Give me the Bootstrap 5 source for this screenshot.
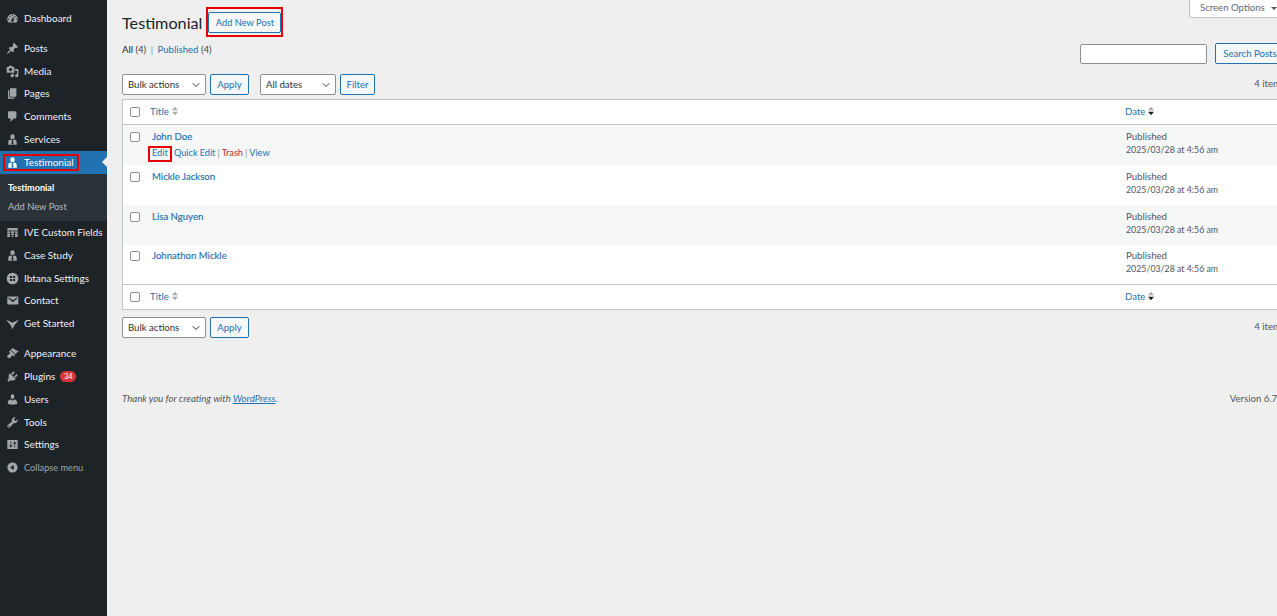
<!DOCTYPE html>
<html lang="en">
<head>
    <meta charset="UTF-8">
    <meta name="viewport" content="width=device-width, initial-scale=1.0">
    <title>Testimonial</title>
    <link href="https://cdn.jsdelivr.net/npm/bootstrap@5.3.0/dist/css/bootstrap.min.css" rel="stylesheet">
    <style>
        html, body { height: 100%; }
        body { background: #efefef; font-family: "Lato", "Liberation Sans", sans-serif; font-size: 9.6px; color: #3c434a; overflow: hidden; }
        a { color: #2271b1; text-decoration: none; }
        .wp-page { width: 1285px; height: 616px; }

        .side-bar { width: 107px; flex: none; background: #1d2327; padding-top: 7px; }
        .side-item { height: 22.85px; padding-left: 6px; gap: 5px; color: #f0f0f1; font-size: 10px; position: relative; white-space: nowrap; }
        .side-item svg { width: 13px; height: 13px; fill: #a2a6aa; flex: none; }
        .side-gap { margin-top: 7px; }
        .side-active { background: #2271b1; color: #fff; }
        .side-active svg { fill: #fff; }
        .side-active::after { content: ""; position: absolute; right: 0; top: 6px; border: 5.5px solid transparent; border-right-color: #efefef; border-left: 0; }
        .side-sub { background: #2c3338; height: 47px; padding: 4px 0 0 8px; }
        .side-sub div { height: 19px; line-height: 19px; font-size: 9.4px; color: #b4b9be; }
        .side-sub .sub-current { color: #fff; font-weight: 700; font-size: 9.1px; }
        .side-item.side-collapse { color: #a2a6aa; font-size: 9.2px; }
        .side-item.side-long { font-size: 9.8px; }
        .plugin-count { background: #d63638; color: #fff; font-size: 7.5px; line-height: 11px; height: 11px; padding: 0 3.5px; border-radius: 6px; }
        .red-box { position: absolute; border: 2px solid #e60000; pointer-events: none; }
        .box-side { left: 3px; top: 3px; width: 76px; height: 17px; }
        .box-add { left: -3px; top: -6px; width: 77px; height: 30px; }
        .box-edit { left: -4px; top: 0; width: 24px; height: 16px; }

        .main-area { flex: 1; padding-left: 15px; position: relative; }
        .screen-tab { position: absolute; right: 0; top: 0; width: 96px; height: 18px; background: #fff; border: 1px solid #c3c4c7; border-top: 0; border-radius: 0 0 0 3px; padding-left: 10px; color: #646970; line-height: 15px; }
        .caret-down { display: inline-block; border: 3.5px solid transparent; border-top-color: #50575e; border-bottom: 0; margin-left: 6px; vertical-align: middle; }
        .head-row { padding-top: 12px; height: 33px; gap: 6px; }
        .page-title { font-size: 16.2px; margin: 0; color: #1d2327; font-weight: 400; line-height: 21px; font-family: inherit; }
        .wp-btn { background: #f6f7f7; border: 1px solid #2271b1; color: #2271b1; border-radius: 2px; font-size: 9.6px; padding: 0; line-height: 19px; height: 21px; text-align: center; display: block; }
        .wp-btn.btn-add { position: relative; width: 73px; font-size: 9.3px; }
        .btn-search { width: 70px; }
        .btn-apply { width: 39px; }
        .btn-filter { width: 35px; }
        .filter-row { margin-top: 10px; height: 20px; font-size: 9.6px; line-height: 13px; }
        .filter-row b { color: #1d2327; font-weight: 400; }
        .filter-row .text-sep { color: #8c8f94; margin: 0 2px; }
        .search-box { width: 127px; height: 20px; background: #fff; border: 1px solid #8c8f94; border-radius: 2px; }
        .wp-select.form-select { width: 84px; height: 21px; font-size: 9.6px; line-height: 1; padding: 0 14px 0 5px; color: #2c3338; border: 1px solid #8c8f94; border-radius: 2px; background-position: right 4px center; background-size: 10px 8px; min-height: 0; }
        .wp-select.select-dates { width: 76px; margin-left: 7px; }
        .table-nav { margin-top: 11px; }
        .item-count { color: #50575e; }

        .post-table { width: 100%; margin: 0; background: #fff; border: 1px solid #c3c4c7; font-size: 9.6px; table-layout: fixed; border-collapse: separate; border-spacing: 0; border-right: 0; }
        .post-table td, .post-table th { border: 0; padding: 0; background: transparent; box-shadow: none; vertical-align: top; font-weight: 400; }
        .post-table .col-check { width: 27px; }
        .post-table .col-date { width: 160px; }
        .head-line td, .head-line th { height: 25px; vertical-align: middle; }
        .post-table thead th { border-bottom: 1px solid #c3c4c7; }
        .post-table tfoot th { border-top: 1px solid #c3c4c7; }
        .post-row td { height: 40px; padding-top: 6px; }
        .post-table .post-row.row-last td { height: 39px; padding-top: 5px; }
        .post-row.row-odd td { background: #f6f7f7; }
        .post-table .post-row td.title-cell { padding-left: 2px; padding-top: 6px; line-height: 12px; }
        .post-table .post-row.row-last td.title-cell { padding-top: 5px; }
        .post-table .post-row td.date-cell { padding-left: 1px; line-height: 13px; color: #50575e; padding-top: 5px; }
        .post-table .post-row.row-last td.date-cell { padding-top: 4px; }
        .date-line { font-size: 8.8px; }
        .post-title { font-size: 9.6px; -webkit-text-stroke: 0.15px #2271b1; }
        .row-links { margin-top: 3px; color: #8c8f94; white-space: nowrap; position: relative; line-height: 13px; font-size: 9.2px; word-spacing: -0.25px; }
        .row-links .edit-wrap { position: relative; display: inline-block; margin-right: 4px; }
        .trash-link { color: #b32d2e; }
        .wp-check.form-check-input { width: 10px; height: 10px; margin: 0 0 0 7px; border: 1px solid #8c8f94; border-radius: 2px; background-color: #fff; float: none; display: block; }
        .post-row .wp-check.form-check-input { margin-top: 1px; }
        .sort-mark { display: inline-block; width: 6px; height: 10px; vertical-align: -1px; margin-left: 3px; }
        .bottom-bar { margin-top: 7px; height: 21px; }
        .foot-line { margin-top: 54px; font-size: 9.6px; color: #50575e; }
        .foot-line a { text-decoration: underline; }
    </style>
</head>
<body>
    <div class="wp-page d-flex">
        <div class="side-bar">
            <div class="side-item d-flex align-items-center"><svg viewBox="0 0 20 20"><path d="M3.76 16h12.48c1.1-1.37 1.76-3.11 1.76-5 0-4.42-3.58-8-8-8s-8 3.58-8 8c0 1.89.66 3.63 1.76 5zM10 4c.55 0 1 .45 1 1s-.45 1-1 1-1-.45-1-1 .45-1 1-1zM6 6c.55 0 1 .45 1 1s-.45 1-1 1-1-.45-1-1 .45-1 1-1zm8 0c.55 0 1 .45 1 1s-.45 1-1 1-1-.45-1-1 .45-1 1-1zm-5.37 5.55L12 7v6c0 1.1-.9 2-2 2s-2-.9-2-2c0-.57.24-1.08.63-1.45zM4 10c.55 0 1 .45 1 1s-.45 1-1 1-1-.45-1-1 .45-1 1-1zm12 0c.55 0 1 .45 1 1s-.45 1-1 1-1-.45-1-1 .45-1 1-1z" fill-rule="evenodd"/></svg>Dashboard</div>
            <div class="side-item side-gap d-flex align-items-center"><svg viewBox="0 0 20 20"><path d="M10.44 3.02l1.82-1.82 6.36 6.35-1.83 1.82c-1.05-.68-2.48-.57-3.41.36l-.75.75c-.92.93-1.04 2.35-.35 3.41l-1.83 1.82-2.41-2.41-2.8 2.79c-.42.42-3.38 2.71-3.8 2.29s1.86-3.39 2.28-3.81l2.79-2.79L4.1 9.36l1.83-1.82c1.05.69 2.48.57 3.4-.36l.75-.75c.93-.92 1.05-2.35.36-3.41z"/></svg>Posts</div>
            <div class="side-item d-flex align-items-center"><svg viewBox="0 0 20 20"><path d="M13 11V4c0-.55-.45-1-1-1h-1.67L9 1H5L3.67 3H2c-.55 0-1 .45-1 1v7c0 .55.45 1 1 1h10c.55 0 1-.45 1-1zM7 4.5c1.38 0 2.5 1.12 2.5 2.5S8.38 9.5 7 9.5 4.5 8.38 4.5 7 5.62 4.5 7 4.5zM14 6h5v10.5c0 1.38-1.12 2.5-2.5 2.5S14 17.88 14 16.5s1.12-2.5 2.5-2.5c.17 0 .34.02.5.05V9h-3V6zm-4 8.05V13h2v3.5c0 1.38-1.12 2.5-2.5 2.5S7 17.88 7 16.5 8.12 14 9.5 14c.17 0 .34.02.5.05z"/></svg>Media</div>
            <div class="side-item d-flex align-items-center"><svg viewBox="0 0 20 20"><path d="M6 15V2h10v13H6zm-1 1h8v2H3V5h2v11z"/></svg>Pages</div>
            <div class="side-item d-flex align-items-center"><svg viewBox="0 0 20 20"><path d="M5 2h9c1.1 0 2 .9 2 2v7c0 1.1-.9 2-2 2h-2l-5 5v-5H5c-1.1 0-2-.9-2-2V4c0-1.1.9-2 2-2z"/></svg>Comments</div>
            <div class="side-item d-flex align-items-center"><svg viewBox="0 0 20 20"><path d="M10 2a3.4 3.4 0 0 1 3.4 3.6c0 2-1.4 3.9-3.4 3.9S6.6 7.6 6.6 5.6A3.4 3.4 0 0 1 10 2zM7.5 10l1.7 1-.7 5.5 1.5 1.5 1.5-1.5-.7-5.5 1.7-1c2.6.3 4 1.6 4 4.5V18H3.5v-3.5c0-2.9 1.4-4.2 4-4.5z"/></svg>Services</div>
            <div class="side-item side-active d-flex align-items-center"><svg viewBox="0 0 20 20"><path d="M10 2a3.4 3.4 0 0 1 3.4 3.6c0 2-1.4 3.9-3.4 3.9S6.6 7.6 6.6 5.6A3.4 3.4 0 0 1 10 2zM7.5 10l1.7 1-.7 5.5 1.5 1.5 1.5-1.5-.7-5.5 1.7-1c2.6.3 4 1.6 4 4.5V18H3.5v-3.5c0-2.9 1.4-4.2 4-4.5z"/></svg>Testimonial<span class="red-box box-side"></span></div>
            <div class="side-sub">
                <div class="sub-current">Testimonial</div>
                <div>Add New Post</div>
            </div>
            <div class="side-item side-long d-flex align-items-center"><svg viewBox="0 0 20 20"><path d="M2 3h16v4H2zM2 8h4v3H2zM7.5 8h5v3h-5zM14 8h4v3h-4zM2 12h4v5H2zM7.5 12h5v2h-5zM14 12h4v5h-4zM8.5 15h3v2h-3z"/></svg>IVE Custom Fields</div>
            <div class="side-item d-flex align-items-center"><svg viewBox="0 0 20 20"><path d="M10 2a3.4 3.4 0 0 1 3.4 3.6c0 2-1.4 3.9-3.4 3.9S6.6 7.6 6.6 5.6A3.4 3.4 0 0 1 10 2zM7.5 10l1.7 1-.7 5.5 1.5 1.5 1.5-1.5-.7-5.5 1.7-1c2.6.3 4 1.6 4 4.5V18H3.5v-3.5c0-2.9 1.4-4.2 4-4.5z"/></svg>Case Study</div>
            <div class="side-item d-flex align-items-center"><svg viewBox="0 0 20 20"><path fill-rule="evenodd" d="M10 1a9 9 0 1 1 0 18 9 9 0 0 1 0-18zM6 6v3.3h3.3V6zm4.7 0v3.3H14V6zM6 10.7V14h3.3v-3.3zm4.7 0V14H14v-3.3z"/></svg>Ibtana Settings</div>
            <div class="side-item d-flex align-items-center"><svg viewBox="0 0 20 20"><path d="M3.87 4h13.25C18.37 4 19 4.59 19 5.79v8.42c0 1.19-.63 1.79-1.88 1.79H3.87c-1.25 0-1.88-.6-1.88-1.79V5.79c0-1.2.63-1.79 1.88-1.79zm6.62 8.6l6.74-5.53c.24-.2.43-.66.13-1.07-.29-.41-.82-.42-1.17-.17l-5.7 3.86L4.8 5.83c-.35-.25-.88-.24-1.17.17-.3.41-.11.87.13 1.07z"/></svg>Contact</div>
            <div class="side-item d-flex align-items-center"><svg viewBox="0 0 20 20"><path d="M0 4l10 5 10-5-7.5 9.5L10 19l-2.5-5.5z"/></svg>Get Started</div>
            <div class="side-item side-gap d-flex align-items-center"><svg viewBox="0 0 20 20"><path d="M14.48 11.06L7.41 3.99l1.5-1.5c.5-.56 2.3-.47 3.51.32 1.21.8 1.43 1.28 2.91 2.1 1.18.64 2.45 1.26 4.45.85zm-.71.71L6.7 4.7 4.93 6.47c-.39.39-.39 1.02 0 1.41l1.06 1.06c.39.39.39 1.03 0 1.42-.6.6-1.43 1.11-2.21 1.69-.35.26-.7.53-1.01.84C1.43 13.23 1.4 14.63 2.7 16.1c1.47 1.3 2.87 1.27 4.27.03.31-.31.58-.66.84-1.01.58-.78 1.09-1.61 1.69-2.21.39-.39 1.03-.39 1.42 0L12 13.97c.39.39 1.02.39 1.41 0z"/></svg>Appearance</div>
            <div class="side-item d-flex align-items-center"><svg viewBox="0 0 20 20"><path d="M13.11 4.36L9.87 7.6 8 5.73l3.24-3.24c.35-.34 1.05-.2 1.56.32.52.51.66 1.21.31 1.55zm-8 1.77l.91-1.12 9.01 9.01-1.19.84c-.71.71-2.63 1.16-3.82 1.16H6.14L4.9 17.26c-.59.59-1.54.59-2.12 0-.59-.58-.59-1.53 0-2.12l1.24-1.24v-3.88c0-1.13.4-3.19 1.09-3.89zm7.26 3.97l3.24-3.24c.34-.35 1.04-.21 1.55.31.52.51.66 1.21.31 1.55l-3.24 3.25z"/></svg>Plugins <span class="plugin-count">34</span></div>
            <div class="side-item d-flex align-items-center"><svg viewBox="0 0 20 20"><path d="M10 9.25c-2.27 0-2.73-3.44-2.73-3.44C7 4.02 7.82 2 9.97 2c2.16 0 2.98 2.02 2.71 3.81 0 0-.41 3.44-2.68 3.44zm0 2.57L12.72 10c2.39 0 4.52 2.33 4.52 4.53v2.49s-3.65 1.13-7.24 1.13c-3.65 0-7.24-1.13-7.24-1.13v-2.49c0-2.25 1.94-4.48 4.47-4.48z"/></svg>Users</div>
            <div class="side-item d-flex align-items-center"><svg viewBox="0 0 20 20"><path d="M16.68 9.77c-1.34 1.34-3.3 1.67-4.95.99l-5.41 6.52c-.99.99-2.59.99-3.58 0s-.99-2.59 0-3.57l6.52-5.42c-.68-1.65-.35-3.61.99-4.95 1.28-1.28 3.12-1.62 4.72-1.06l-2.89 2.89 2.82 2.82 2.86-2.87c.53 1.58.18 3.39-1.08 4.65zM3.81 16.21c.4.39 1.04.39 1.43 0 .4-.4.4-1.04 0-1.43-.39-.4-1.03-.4-1.43 0-.39.39-.39 1.03 0 1.43z"/></svg>Tools</div>
            <div class="side-item d-flex align-items-center"><svg viewBox="0 0 20 20"><path d="M18 16V4c0-.55-.45-1-1-1H3c-.55 0-1 .45-1 1v12c0 .55.45 1 1 1h14c.55 0 1-.45 1-1zM8 11h1c.55 0 1 .45 1 1s-.45 1-1 1H8v1.5c0 .28-.22.5-.5.5s-.5-.22-.5-.5V13H6c-.55 0-1-.45-1-1s.45-1 1-1h1V5.5c0-.28.22-.5.5-.5s.5.22.5.5V11zm5-2h-1c-.55 0-1-.45-1-1s.45-1 1-1h1V5.5c0-.28.22-.5.5-.5s.5.22.5.5V7h1c.55 0 1 .45 1 1s-.45 1-1 1h-1v5.5c0 .28-.22.5-.5.5s-.5-.22-.5-.5V9z"/></svg>Settings</div>
            <div class="side-item side-collapse d-flex align-items-center"><svg viewBox="0 0 20 20"><path d="M10 2.16c4.33 0 7.84 3.51 7.84 7.84s-3.51 7.84-7.84 7.84S2.16 14.33 2.16 10 5.71 2.16 10 2.16zm2 11.72V6.12L6.18 9.97z"/></svg>Collapse menu</div>
        </div>

        <div class="main-area">
            <div class="screen-tab">Screen Options<span class="caret-down"></span></div>

            <div class="head-row d-flex align-items-center">
                <h1 class="page-title">Testimonial</h1>
                <a class="wp-btn btn-add" href="#">Add New Post<span class="red-box box-add"></span></a>
            </div>

            <div class="filter-row d-flex justify-content-between align-items-start">
                <div><b>All</b> (4) <span class="text-sep">|</span> <a href="#">Published</a> (4)</div>
                <div class="d-flex align-items-center">
                    <div class="search-box"></div>
                    <a class="wp-btn btn-search ms-2" href="#">Search Posts</a>
                </div>
            </div>

            <div class="table-nav d-flex justify-content-between align-items-center">
                <div class="d-flex gap-1 align-items-center">
                    <select class="form-select wp-select"><option>Bulk actions</option></select>
                    <a class="wp-btn btn-apply" href="#">Apply</a>
                    <select class="form-select wp-select select-dates"><option>All dates</option></select>
                    <a class="wp-btn btn-filter" href="#">Filter</a>
                </div>
                <div class="item-count">4 items</div>
            </div>

            <div class="mt-1">
                <table class="table post-table">
                    <thead>
                        <tr class="head-line">
                            <th class="col-check"><input class="form-check-input wp-check" type="checkbox"></th>
                            <th><a href="#">Title</a><svg class="sort-mark" viewBox="0 0 7 10"><path d="M3.5 0L7 4H0z" fill="#a7aaad"/><path d="M3.5 10L0 6h7z" fill="#a7aaad"/></svg></th>
                            <th class="col-date"><a href="#">Date</a><svg class="sort-mark" viewBox="0 0 7 10"><path d="M3.5 0L7 4H0z" fill="#a7aaad"/><path d="M3.5 10L0 6h7z" fill="#1d2327"/></svg></th>
                        </tr>
                    </thead>
                    <tbody>
                        <tr class="post-row row-odd">
                            <td><input class="form-check-input wp-check" type="checkbox"></td>
                            <td class="title-cell"><a class="post-title" href="#">John Doe</a>
                                <div class="row-links"><span class="edit-wrap"><a href="#">Edit</a><span class="red-box box-edit"></span></span> <a href="#">Quick Edit</a> | <a class="trash-link" href="#">Trash</a> | <a href="#">View</a></div>
                            </td>
                            <td class="date-cell">Published<br><span class="date-line">2025/03/28 at 4:56 am</span></td>
                        </tr>
                        <tr class="post-row">
                            <td><input class="form-check-input wp-check" type="checkbox"></td>
                            <td class="title-cell"><a class="post-title" href="#">Mickle Jackson</a></td>
                            <td class="date-cell">Published<br><span class="date-line">2025/03/28 at 4:56 am</span></td>
                        </tr>
                        <tr class="post-row row-odd">
                            <td><input class="form-check-input wp-check" type="checkbox"></td>
                            <td class="title-cell"><a class="post-title" href="#">Lisa Nguyen</a></td>
                            <td class="date-cell">Published<br><span class="date-line">2025/03/28 at 4:56 am</span></td>
                        </tr>
                        <tr class="post-row row-last">
                            <td><input class="form-check-input wp-check" type="checkbox"></td>
                            <td class="title-cell"><a class="post-title" href="#">Johnathon Mickle</a></td>
                            <td class="date-cell">Published<br><span class="date-line">2025/03/28 at 4:56 am</span></td>
                        </tr>
                    </tbody>
                    <tfoot>
                        <tr class="head-line">
                            <th class="col-check"><input class="form-check-input wp-check" type="checkbox"></th>
                            <th><a href="#">Title</a><svg class="sort-mark" viewBox="0 0 7 10"><path d="M3.5 0L7 4H0z" fill="#a7aaad"/><path d="M3.5 10L0 6h7z" fill="#a7aaad"/></svg></th>
                            <th class="col-date"><a href="#">Date</a><svg class="sort-mark" viewBox="0 0 7 10"><path d="M3.5 0L7 4H0z" fill="#a7aaad"/><path d="M3.5 10L0 6h7z" fill="#1d2327"/></svg></th>
                        </tr>
                    </tfoot>
                </table>
            </div>

            <div class="bottom-bar d-flex justify-content-between align-items-center">
                <div class="d-flex gap-1 align-items-center">
                    <select class="form-select wp-select"><option>Bulk actions</option></select>
                    <a class="wp-btn btn-apply" href="#">Apply</a>
                </div>
                <div class="item-count">4 items</div>
            </div>

            <div class="foot-line d-flex justify-content-between">
                <i>Thank you for creating with <a href="#">WordPress</a>.</i>
                <span>Version 6.7.2</span>
            </div>
        </div>
    </div>
    <script src="https://cdn.jsdelivr.net/npm/bootstrap@5.3.0/dist/js/bootstrap.bundle.min.js"></script>
</body>
</html>
